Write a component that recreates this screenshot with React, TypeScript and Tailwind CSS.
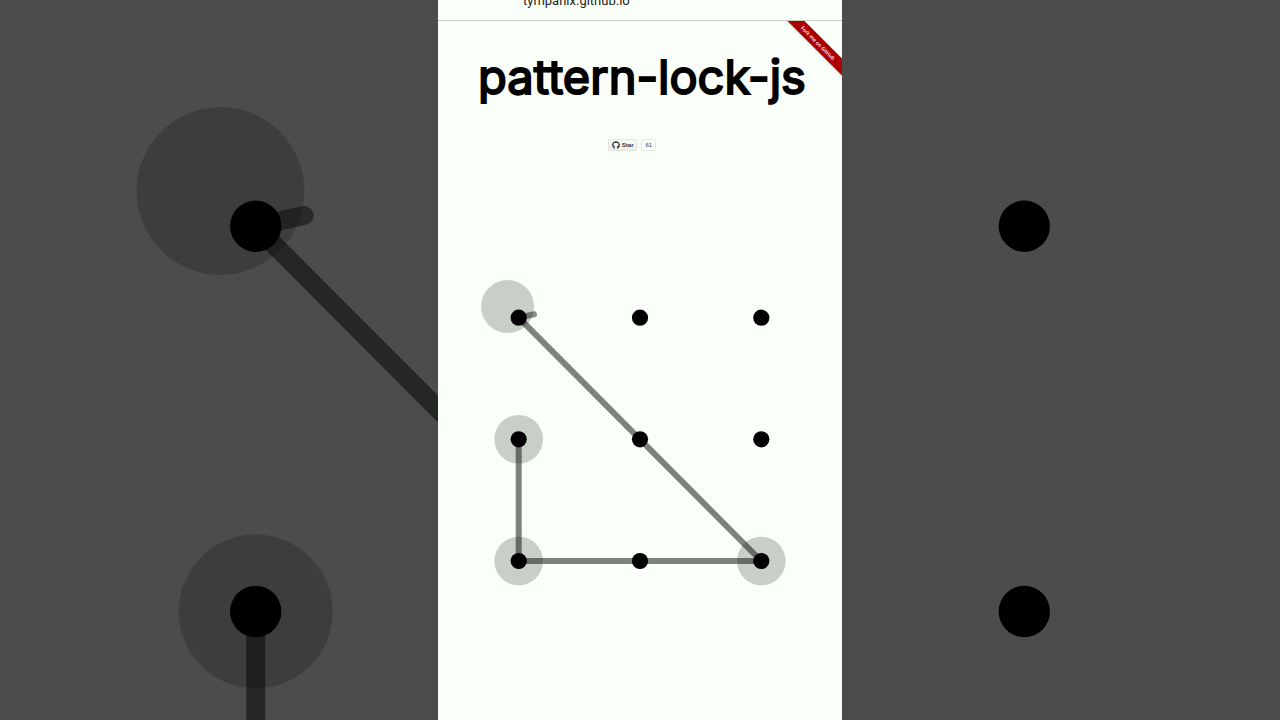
import { FaGithub } from 'react-icons/fa';

const columns = [80.7, 202, 323.3];
const rows = [80.7, 202.3, 324];

const rings = [
  { x: 69.6, y: 69.6, r: 26.5 },
  { x: 80.7, y: 202.3, r: 24.3 },
  { x: 80.7, y: 324, r: 24.3 },
  { x: 323.3, y: 324, r: 24.3 },
];

function Pattern({ viewBox, className }: { viewBox: string; className: string }) {
  return (
    <svg viewBox={viewBox} preserveAspectRatio="xMidYMid slice" className={className} aria-hidden="true">
      <polyline
        points="80.7,202.3 80.7,324 323.3,324 80.7,80.7"
        fill="none"
        stroke="#7d827b"
        strokeWidth="6"
        strokeLinejoin="round"
      />
      <line x1="80.7" y1="80.7" x2="96" y2="77.3" stroke="#000" strokeOpacity="0.45" strokeWidth="6" strokeLinecap="round" />
      {rings.map((ring, index) => (
        <circle key={index} cx={ring.x} cy={ring.y} r={ring.r} fill="#0a1a08" fillOpacity="0.21" />
      ))}
      {rows.map((y) => columns.map((x) => <circle key={`${x}-${y}`} cx={x} cy={y} r="8.1" fill="#000" />))}
    </svg>
  );
}

function ForkRibbon() {
  return (
    <div className="absolute top-0 right-0 size-16 overflow-hidden">
      <a
        href="https://github.com/tympanix/pattern-lock-js"
        className="absolute top-4 -right-10 w-32 rotate-45 bg-[#aa0000] text-center font-['Open_Sans',sans-serif] text-[5px] leading-3 font-semibold text-white shadow-sm"
      >
        Fork me on GitHub
      </a>
    </div>
  );
}

function StarButton() {
  return (
    <div className="flex gap-1 font-['Liberation_Sans',sans-serif] text-[6px] leading-[10px] font-bold text-[#333]">
      <button
        type="button"
        className="flex items-center gap-0.5 rounded-xs border border-[#e2e5e0] bg-linear-to-b from-[#fafcf8] to-[#eceeea] px-[3px]"
      >
        <FaGithub size={8} />
        Star
      </button>
      <a
        href="https://github.com/tympanix/pattern-lock-js/stargazers"
        className="rounded-xs border border-[#e8ebe6] px-[3px] font-normal"
      >
        61
      </a>
    </div>
  );
}

export default function App() {
  return (
    <div className="relative flex min-h-screen justify-center overflow-hidden bg-[#fdfdfd]">
      <Pattern viewBox="0 9.3 404 227.25" className="absolute inset-0 size-full" />
      <div className="absolute inset-0 bg-black/70" />

      <main className="relative flex w-full max-w-[404px] flex-col bg-[#fbfffa] text-black">
        <header className="h-[21px] border-b border-[#c8cbc6] px-[85px] font-[Roboto,sans-serif] text-[13px] leading-px text-[#222]">
          tympanix.github.io
        </header>
        <div className="relative flex flex-col items-center">
          <ForkRibbon />
          <h1 className="pt-6 pl-1 font-[Inter,sans-serif] text-[47px] leading-16 [-webkit-text-stroke:2px_black]">
            pattern-lock-js
          </h1>
          <div className="flex w-full justify-center pt-[30px] pr-4">
            <StarButton />
          </div>
        </div>
        <Pattern viewBox="0 0 404 404" className="mt-[86px] w-full" />
      </main>
    </div>
  );
}
